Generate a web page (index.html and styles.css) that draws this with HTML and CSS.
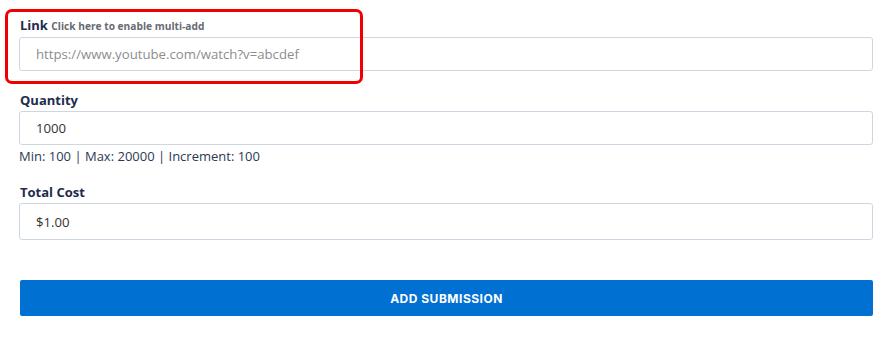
FILE: index.html
```html
<!DOCTYPE html>
<html>
<head>
<meta charset="utf-8">
<link rel="stylesheet" href="styles.css">
</head>
<body>
<form class="form">
  <div class="field field-link">
    <label class="label">Link <span class="label-hint">Click here to enable multi-add</span></label>
    <input class="input" type="text" placeholder="https://www.youtube.com/watch?v=abcdef">
    <div class="highlight"></div>
  </div>
  <div class="field field-qty">
    <label class="label">Quantity</label>
    <input class="input" type="text" value="1000">
    <div class="help">Min: 100 | Max: 20000 | Increment: 100</div>
  </div>
  <div class="field field-total">
    <label class="label">Total Cost</label>
    <input class="input input-tall" type="text" value="$1.00">
  </div>
  <button class="submit" type="button">ADD SUBMISSION</button>
</form>
</body>
</html>
```
FILE: styles.css
```css
* { box-sizing: border-box; }
html, body { margin: 0; padding: 0; background: #fff; }
body { font-family: "Open Sans", "Noto Sans", sans-serif; }
.form {
  width: 873px;
  padding: 15px 0 0 19px;
  display: flex;
  flex-direction: column;
}
.field { position: relative; display: flex; flex-direction: column; }
.label {
  font-size: 13px;
  font-weight: 700;
  color: #1e2c4c;
  line-height: 18px;
  margin-bottom: 2px;
  padding-left: 1px;
}
.label-hint {
  font-size: 10.2px;
  font-weight: 700;
  color: #666b73;
}
.input {
  height: 34px;
  width: 100%;
  border: 1px solid #ccd7e2;
  border-radius: 3px;
  padding: 0 16px;
  font-family: "Open Sans", "Noto Sans", sans-serif;
  font-size: 13.2px;
  color: #333;
  background: #fff;
  outline: none;
}
.input::placeholder { color: #8d8d8d; }
.input-tall { height: 37px; }
.highlight {
  position: absolute;
  left: -14px;
  top: -7px;
  width: 358px;
  height: 75px;
  border: 3px solid #f00000;
  border-radius: 7px;
  pointer-events: none;
}
.field-link { margin-top: 1px; }
.field-qty { margin-top: 20px; }
.help {
  margin-top: 3px;
  font-size: 13px;
  line-height: 16px;
  color: #2b3a55;
}
.field-total { margin-top: 19px; }
.submit {
  margin-top: 40px;
  margin-left: 1px;
  width: 853px;
  height: 36px;
  border: none;
  border-radius: 2px;
  background: #0070d2;
  color: #fff;
  font-family: "Inter", "Open Sans", sans-serif;
  font-weight: 700;
  font-size: 12px;
  letter-spacing: 0.5px;
  cursor: pointer;
}
```
